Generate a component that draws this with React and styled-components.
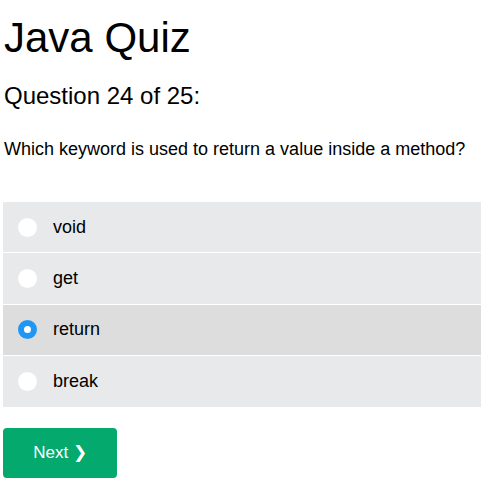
import React, { useState } from "react";
import styled, { createGlobalStyle } from "styled-components";

const GlobalStyle = createGlobalStyle`
  body {
    margin: 0;
    background: #fff;
    font-family: "Liberation Sans", Arial, sans-serif;
    color: #000;
  }
`;

const Page = styled.div`
  padding: 0 0 0 3px;
`;

const Title = styled.h1`
  margin: 14px 0 0 1px;
  font-size: 42px;
  font-weight: 400;
  line-height: 48px;
`;

const Counter = styled.h2`
  margin: 20px 0 0 1px;
  font-size: 24px;
  font-weight: 400;
  line-height: 28px;
`;

const QuestionText = styled.p`
  margin: 29px 0 0 1px;
  font-size: 18px;
  line-height: 21px;
`;

const OptionList = styled.div`
  margin-top: 42px;
  display: flex;
  flex-direction: column;
  gap: 1px;
`;

const Option = styled.label`
  display: flex;
  align-items: center;
  height: 50.4px;
  padding-left: 15px;
  background: ${(p) => (p.$checked ? "#dddddd" : "#e7e9eb")};
  font-size: 18px;
  cursor: pointer;
`;

const Radio = styled.span`
  box-sizing: border-box;
  width: 19px;
  height: 19px;
  border-radius: 50%;
  background: #fff;
  border: ${(p) => (p.$checked ? "6px solid #2196f3" : "none")};
  margin-right: 16px;
  flex: 0 0 auto;
`;

const NextButton = styled.button`
  margin-top: 21px;
  width: 114px;
  height: 50px;
  border: none;
  border-radius: 4px;
  background: #04aa6d;
  color: #fff;
  font-family: "Liberation Sans", Arial, sans-serif;
  font-size: 17px;
  cursor: pointer;
`;

const OPTIONS = ["void", "get", "return", "break"];

export default function App() {
  const [picked, setPicked] = useState(2);

  return (
    <Page>
      <GlobalStyle />
      <Title>Java Quiz</Title>
      <Counter>Question 24 of 25:</Counter>
      <QuestionText>Which keyword is used to return a value inside a method?</QuestionText>
      <OptionList>
        {OPTIONS.map((opt, i) => (
          <Option key={opt} $checked={picked === i} onClick={() => setPicked(i)}>
            <Radio $checked={picked === i} />
            {opt}
          </Option>
        ))}
      </OptionList>
      <NextButton>Next ❯</NextButton>
    </Page>
  );
}
